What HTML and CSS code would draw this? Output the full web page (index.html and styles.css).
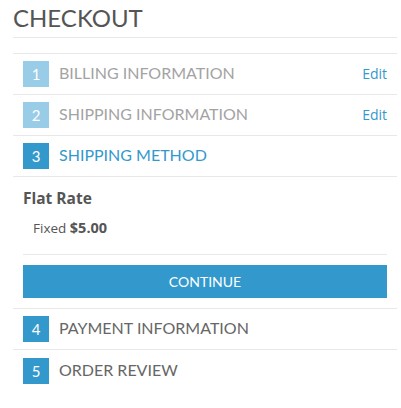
FILE: index.html
```html
<!DOCTYPE html>
<html>
<head>
<meta charset="utf-8">
<link rel="stylesheet" href="styles.css">
</head>
<body>
<div class="checkout">
  <h1 class="page-title">CHECKOUT</h1>
  <ol class="steps">
    <li class="step done">
      <span class="num">1</span><span class="label">BILLING INFORMATION</span><a class="edit">Edit</a>
    </li>
    <li class="step done">
      <span class="num">2</span><span class="label">SHIPPING INFORMATION</span><a class="edit">Edit</a>
    </li>
    <li class="step active">
      <span class="num">3</span><span class="label">SHIPPING METHOD</span>
    </li>
    <li class="step-body">
      <div class="method-name">Flat Rate</div>
      <div class="method-price">Fixed <b>$5.00</b></div>
      <div class="divider"></div>
      <button class="continue">CONTINUE</button>
    </li>
    <li class="step">
      <span class="num">4</span><span class="label">PAYMENT INFORMATION</span>
    </li>
    <li class="step last">
      <span class="num">5</span><span class="label">ORDER REVIEW</span>
    </li>
  </ol>
</div>
</body>
</html>
```

FILE: styles.css
```css
* { box-sizing: border-box; }
body {
  margin: 0;
  padding: 0 0 0 13px;
  background: #fff;
  font-family: "Open Sans", "DejaVu Sans", sans-serif;
}
.checkout { width: 384px; }
.page-title {
  margin: 0;
  height: 38px;
  padding-top: 4px;
  font-family: Lato, "Open Sans", sans-serif;
  font-weight: 400;
  font-size: 24px;
  line-height: 28px;
  color: #555;
  border-bottom: 1px solid #e8e8e8;
}
.steps {
  list-style: none;
  margin: 15px 0 0;
  padding: 0;
  border-top: 1px solid #e8e8e8;
}
.step {
  display: flex;
  align-items: center;
  height: 41px;
  padding: 0 10px;
  border-bottom: 1px solid #e8e8e8;
}
.step.last { border-bottom: none; }
.num {
  width: 26px;
  height: 26px;
  background: #3399cc;
  color: #fff;
  font-family: Lato, sans-serif;
  font-size: 15px;
  line-height: 26px;
  text-align: center;
}
.label {
  margin-left: 10px;
  font-family: Lato, sans-serif;
  font-size: 16px;
  line-height: 20px;
  color: #666;
  flex: 1;
  margin-top: -2px;
}
.step.done .num { background: #99cce6; }
.step.done .label { color: #a3a3a3; }
.step.active .label { color: #3399cc; }
.edit {
  font-size: 14px;
  color: #3399cc;
  margin-top: -2px;
}
.step-body {
  padding: 11px 10px 10px;
  border-bottom: 1px solid #e8e8e8;
}
.method-name {
  font-weight: 700;
  font-size: 15.5px;
  line-height: 20px;
  color: #555;
}
.method-price {
  margin-top: 10px;
  padding-left: 10px;
  font-size: 13.5px;
  line-height: 20px;
  color: #555;
}
.method-price b { font-size: 14.5px; }
.divider {
  margin-top: 16px;
  height: 1px;
  background: #e8e8e8;
}
.continue {
  display: block;
  width: 100%;
  height: 33px;
  margin-top: 10px;
  border: none;
  background: #3399cc;
  color: #fff;
  font-family: Lato, sans-serif;
  font-size: 14px;
  padding: 0;
}
```
